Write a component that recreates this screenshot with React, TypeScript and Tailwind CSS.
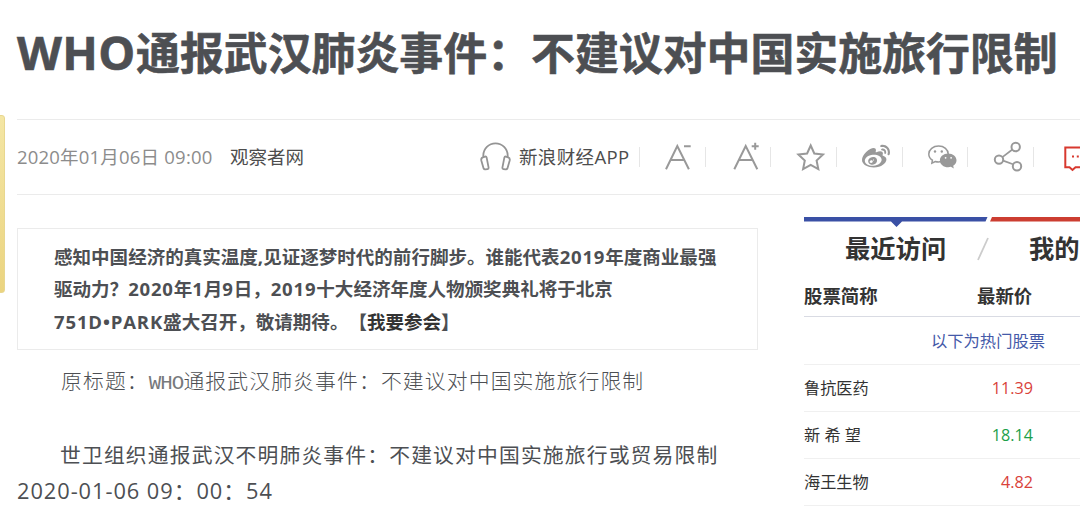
import React from 'react';
import { FaWeibo } from 'react-icons/fa';

interface Stock {
  name: string;
  price: string;
  up: boolean;
}

const stocks: Stock[] = [
  { name: '鲁抗医药', price: '11.39', up: true },
  { name: '新 希 望', price: '18.14', up: false },
  { name: '海王生物', price: '4.82', up: true },
];

const HeadphonesIcon = () => (
  <svg className="shrink-0" width="32" height="32" viewBox="0 0 32 32" fill="none" stroke="#949494" strokeWidth="1.8" strokeLinejoin="round">
    <path d="M4.300 17V14.500a12.200 12.200 0 0 1 24.400 0V17" />
    <path d="M3.900 16.300 6 15.600c.8-.2 1.400.1 1.600.8l2 10.300c.1.8-.3 1.300-1 1.400l-2.300.3c-.8.1-1.400-.3-1.700-1L2.300 19.500c-.3-1.500.3-2.900 1.600-3.200Z" />
    <path d="m29.100 16.300-2.100-.7c-.8-.2-1.400.1-1.600.8l-2 10.300c-.1.8.3 1.300 1 1.400l2.300.3c.8.1 1.400-.3 1.700-1l2.300-7.900c.3-1.500-.3-2.900-1.600-3.200Z" />
  </svg>
);

const FontSmallerIcon = () => (
  <svg width="32" height="32" viewBox="0 0 32 32" fill="none" stroke="#999" strokeWidth="2">
    <path d="M3 28.300 14.300 5l11.600 23.300M7.400 19h13.600M21 5.300h6.700" />
  </svg>
);

const FontLargerIcon = () => (
  <svg width="32" height="32" viewBox="0 0 32 32" fill="none" stroke="#999" strokeWidth="2">
    <path d="M5.300 28.300 16.700 5l11.600 23.300M9.700 19h13.600M22.700 5.300h7M26.200 1.800v7" />
  </svg>
);

const StarIcon = () => (
  <svg width="32" height="32" viewBox="0 0 32 32" fill="none" stroke="#999" strokeWidth="2">
    <path d="m16.700 4.500 3.600 8 8.700 1-6.400 6 1.700 8.600-7.600-4.300-7.600 4.300 1.700-8.600-6.400-6 8.700-1Z" />
  </svg>
);

const WechatIcon = () => (
  <svg width="32" height="32" viewBox="0 0 32 32">
    <path d="M12.600 5c-5.500 0-9.800 3.500-9.800 8 0 2.600 1.400 4.800 3.600 6.200l-.5 3 3.300-1.700c1 .3 2.200.5 3.400.5 5.500 0 9.600-3.500 9.600-8s-4.100-8-9.600-8Z" fill="none" stroke="#999" strokeWidth="1.5" />
    <circle cx="9" cy="10.500" r="1.200" fill="#999" />
    <circle cx="15.800" cy="10.500" r="1.200" fill="#999" />
    <path d="M22.200 12.600c-4.700 0-8.300 3-8.300 6.800s3.600 6.800 8.300 6.800c1 0 1.900-.1 2.700-.4l2.900 1.700-.6-2.700c2-1.200 3.300-3.200 3.300-5.400 0-3.800-3.600-6.800-8.300-6.800Z" fill="#999" />
    <circle cx="19.600" cy="16.800" r="0.900" fill="#fff" />
    <circle cx="25.100" cy="16.800" r="0.900" fill="#fff" />
  </svg>
);

const ShareIcon = () => (
  <svg width="32" height="32" viewBox="0 0 32 32" fill="none" stroke="#999" strokeWidth="2">
    <circle cx="24.700" cy="6" r="4.200" />
    <circle cx="8" cy="18.600" r="4.200" />
    <circle cx="26" cy="25.300" r="4.200" />
    <path d="m11.400 16.100 10-7.600M12.100 19.600l9.900 3.700" strokeWidth="1.700" />
  </svg>
);

const CommentIcon = () => (
  <svg width="32" height="32" viewBox="0 0 32 32" fill="none" stroke="#d8392f" strokeWidth="2">
    <path d="M8.300 6.500H31v19.800H18.500l-3 2.700-3-2.700H8.300Z" />
    <path d="M15 15.500h2M19.800 15.500h2M24.600 15.500h2" />
  </svg>
);

const tools = [
  { id: 'smaller', icon: <FontSmallerIcon /> },
  { id: 'larger', icon: <FontLargerIcon /> },
  { id: 'star', icon: <StarIcon /> },
  { id: 'weibo', icon: <FaWeibo size={28} color="#999" /> },
  { id: 'wechat', icon: <WechatIcon /> },
  { id: 'share', icon: <ShareIcon /> },
  { id: 'comment', icon: <CommentIcon /> },
];

const MetaBar = () => (
  <div className="ml-[17px] flex h-[76px] items-center border-y border-[#ebebeb] text-[18.500px] whitespace-nowrap">
    <span className="w-[213px] shrink-0 tracking-[0.200px] text-[#8c8c8c]">2020年01月06日 09:00</span>
    <span className="w-[249px] shrink-0 text-[#4d4d4d]">观察者网</span>
    <HeadphonesIcon />
    <span className="ml-2 w-[120px] shrink-0 tracking-[0.350px] text-[#4d4d4d]">新浪财经APP</span>
    {tools.map((tool) => (
      <div key={tool.id} className="flex h-5 w-[65.700px] shrink-0 items-center border-l border-[#e6e6e6] pl-[23px]">
        <div className="flex size-8 shrink-0 items-center justify-center">{tool.icon}</div>
      </div>
    ))}
  </div>
);

const Article = () => (
  <main className="ml-[17px] w-[741px] shrink-0 whitespace-nowrap text-[#4d4f53]">
    <div className="mt-[33px] h-[122px] border border-[#ebebeb] pt-[12px] pl-[36px] text-[18.550px] leading-[32.300px] font-bold [text-spacing-trim:space-all]">
      <p>
        感知中国经济的真实温度,见证逐梦时代的前行脚步。谁能代表<span className="tracking-[0.800px]">2019</span>年度商业最强
      </p>
      <p>
        驱动力？<span className="tracking-[0.800px]">2020</span>年<span className="tracking-[0.800px]">1</span>月
        <span className="tracking-[0.800px]">9</span>日，<span className="tracking-[0.800px]">2019</span>十大经济年度人物颁奖典礼将于北京
      </p>
      <p>
        <span className="tracking-[0.850px]">751D•PARK</span>盛大召开，敬请期待。【<span className="text-[#333]">我要参会</span>】
      </p>
    </div>
    <p className="mt-[13px] pl-[44px] text-[20.800px] leading-[37px] font-light tracking-[1.150px]">
      原标题：<span className="font-['Liberation_Mono'] tracking-[-0.950px] text-[#77797c]">WHO</span>通报武汉肺炎事件：不建议对中国实施旅行限制
    </p>
    <div className="mt-[35px] text-[20.800px] leading-[36.500px] tracking-[1.150px]">
      <p className="pl-[44px] -indent-px">世卫组织通报武汉不明肺炎事件：不建议对中国实施旅行或贸易限制</p>
      <p className="text-[21.800px] leading-[34px] tracking-[0.950px]">2020-01-06 09：00：54</p>
    </div>
  </main>
);

const StockPanel = () => (
  <aside className="ml-[46px] w-[276px] shrink-0 overflow-hidden whitespace-nowrap text-[#333]">
    <svg className="mt-[22px] block" width="276" height="11" viewBox="0 0 276 11">
      <path d="M0 0h183.500l-2 4.500H98l-5.500 5.500-5.500-5.500H0Z" fill="#3a50a5" />
      <path d="M188 0h88v4.500h-90Z" fill="#cc3d31" />
    </svg>
    <div className="flex h-[42px] items-center text-[25.300px] font-bold">
      <span className="ml-[41px] w-[132px] shrink-0">最近访问</span>
      <svg className="shrink-0" width="12" height="24" viewBox="0 0 12 24">
        <path d="M1 23 11 1" stroke="#ccc" strokeWidth="1.800" />
      </svg>
      <span className="ml-[40px] shrink-0">我的</span>
    </div>
    <div className="flex h-[47px] items-center border-b border-[#d9dbe3] pt-[5px] text-[18.400px] font-bold">
      <span className="w-[173px]">股票简称</span>
      <span>最新价</span>
    </div>
    <div className="flex h-[48px] items-center border-b border-[#f0f0f0] pt-[2px] pl-[127px] text-[16.300px] text-[#4459a8]">
      以下为热门股票
    </div>
    {stocks.map((stock) => (
      <div key={stock.name} className="flex h-[47px] items-center border-b border-[#f0f0f0] text-[16.200px]">
        <span className="w-[120px]">{stock.name}</span>
        <span className={`w-[109px] text-right ${stock.up ? 'text-[#d9423a]' : 'text-[#1ba049]'}`}>{stock.price}</span>
      </div>
    ))}
  </aside>
);

const App: React.FC = () => {
  return (
    <div className="relative h-[517px] w-[1080px] overflow-hidden bg-white font-['Open_Sans','Noto_Sans_CJK_SC',sans-serif]">
      <div className="absolute top-[115px] left-[-6px] h-[178px] w-[11px] rounded-[3px] border border-[#e8d78f] bg-gradient-to-b from-[#f4e6a4] to-[#ebd480]" />
      <h1 className="flex h-[119px] items-baseline pt-[17px] pl-[17px] text-[43.900px] leading-[70px] font-bold whitespace-nowrap text-[#4d4f53] [-webkit-text-stroke:0.6px_#4d4f53]">
        <span className="w-[119px] text-[46.500px] tracking-[0.300px]">WHO</span>
        <span>通报武汉肺炎事件：不建议对中国实施旅行限制</span>
      </h1>
      <MetaBar />
      <div className="flex">
        <Article />
        <StockPanel />
      </div>
    </div>
  );
};

export default App;
